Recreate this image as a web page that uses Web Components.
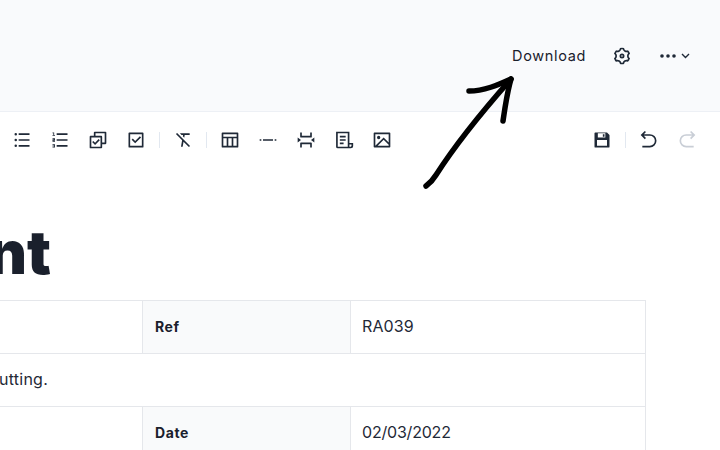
<!DOCTYPE html>
<html lang="en">
<head>
<meta charset="utf-8">
<title>Document</title>
<style>
html, body { margin: 0; height: 100%; overflow: hidden; background: #fff; }
body { font-family: Inter, "Liberation Sans", sans-serif; color: #1f2937; }
</style>
</head>
<body>
<app-page>
  <app-header>Download</app-header>
  <tool-bar>
    <tool-btn icon="ul"></tool-btn>
    <tool-btn icon="ol"></tool-btn>
    <tool-btn icon="checks"></tool-btn>
    <tool-btn icon="check"></tool-btn>
    <tool-sep></tool-sep>
    <tool-btn icon="clear"></tool-btn>
    <tool-sep></tool-sep>
    <tool-btn icon="table"></tool-btn>
    <tool-btn icon="rule"></tool-btn>
    <tool-btn icon="pagebreak"></tool-btn>
    <tool-btn icon="scroll"></tool-btn>
    <tool-btn icon="image"></tool-btn>
    <tool-btn icon="save" slot="end"></tool-btn>
    <tool-sep slot="end"></tool-sep>
    <tool-btn icon="undo" slot="end"></tool-btn>
    <tool-btn icon="redo" slot="end" muted></tool-btn>
  </tool-bar>
  <doc-sheet>
    <doc-title>nt</doc-title>
    <spec-table>
      <spec-cell></spec-cell>
      <spec-cell label>Ref</spec-cell>
      <spec-cell value>RA039</spec-cell>
      <spec-cell wide>utting.</spec-cell>
      <spec-cell></spec-cell>
      <spec-cell label>Date</spec-cell>
      <spec-cell value tight>02/03/2022</spec-cell>
    </spec-table>
  </doc-sheet>
  <sketch-arrow></sketch-arrow>
</app-page>

<script>
const ICONS = {
  ul: '<path d="M8 4h13v2H8V4zM4.5 6.500a1.500 1.500 0 1 1 0-3 1.500 1.500 0 0 1 0 3zm0 7a1.500 1.500 0 1 1 0-3 1.500 1.500 0 0 1 0 3zm0 6.900a1.500 1.500 0 1 1 0-3 1.500 1.500 0 0 1 0 3zM8 11h13v2H8v-2zm0 7h13v2H8v-2z"/>',
  ol: '<path d="M8 4h13v2H8V4zM5 3v3h1v1H3V6h1V4H3V3h2zM3 14v-2.500h2V11H3v-1h3v2.500H4v.5h2v1H3zm2 5.500H3v-1h2V18H3v-1h3v4H3v-1h2v-.5zM8 11h13v2H8v-2zm0 7h13v2H8v-2z"/>',
  checks: '<path d="M7 7V3a1 1 0 0 1 1-1h13a1 1 0 0 1 1 1v13a1 1 0 0 1-1 1h-4v3.993c0 .556-.449 1.007-1.007 1.007H3.007A1.006 1.006 0 0 1 2 20.993l.003-12.986C2.003 7.451 2.452 7 3.010 7H7zm2 0h6.993C16.549 7 17 7.449 17 8.007V15h3V4H9v3zm6 2H4.003L4 20h11V9zm-6.497 9l-3.536-3.536 1.414-1.414 2.122 2.122 4.242-4.243 1.414 1.414L8.503 18z"/>',
  check: '<path d="M4 3h16a1 1 0 0 1 1 1v16a1 1 0 0 1-1 1H4a1 1 0 0 1-1-1V4a1 1 0 0 1 1-1zm1 2v14h14V5H5zm6.003 11L6.760 11.757l1.414-1.414 2.829 2.829 5.656-5.657 1.415 1.414L11.003 16z"/>',
  clear: '<path d="M12.651 14.065L11.605 20H9.574l1.350-7.661-7.410-7.410L4.930 3.515 20.485 19.070l-1.414 1.414-6.420-6.420zm-.878-6.535l.270-1.530h-1.800l-2-2H20v2h-5.927L13.500 9.257 11.773 7.530z"/>',
  table: '<path d="M4 8h16V5H4v3zm10 11v-9h-4v9h4zm2 0h4v-9h-4v9zm-8 0v-9H4v9h4zM3 3h18a1 1 0 0 1 1 1v16a1 1 0 0 1-1 1H3a1 1 0 0 1-1-1V4a1 1 0 0 1 1-1z"/>',
  rule: '<path d="M2 11h2v2H2v-2zm4 0h12v2H6v-2zm14 0h2v2h-2v-2z"/>',
  pagebreak: '<path d="M17 21v-4H7v4H5v-5a1 1 0 0 1 1-1h12a1 1 0 0 1 1 1v5h-2zM7 3v4h10V3h2v5a1 1 0 0 1-1 1H6a1 1 0 0 1-1-1V3h2zM2 9l4 3-4 3V9zm20 0v6l-4-3 4-3z"/>',
  scroll: '<path fill="none" stroke="currentColor" stroke-width="2" d="M3.500 3h14v18h-13a1 1 0 0 1-1-1V3zM17.500 16.500h4.500V19a2 2 0 0 1-2 2h-2.500"/><path d="M7 7h7v2H7zM7 11h7v2H7zM7 15h4.500v2H7z"/>',
  image: '<path d="M4.828 21l-.020.020-.021-.020H2.992A.993.993 0 0 1 2 20.007V3.993A1 1 0 0 1 2.992 3h18.016c.548 0 .992.445.992.993v16.014a1 1 0 0 1-.992.993H4.828zM20 15V5H4v14L14 9l6 6zm0 2.828l-6-6L6.828 19H20v-1.172zM8 11a2 2 0 1 1 0-4 2 2 0 0 1 0 4z"/>',
  save: '<path d="M4 3h14l2.707 2.707a1 1 0 0 1 .293.707V20a1 1 0 0 1-1 1H4a1 1 0 0 1-1-1V4a1 1 0 0 1 1-1zm3 1v5h9V4H7zm-1 8v7h12v-7H6zm7-7h2v3h-2V5z"/>',
  undo: '<path d="M5.828 7l2.536 2.536L6.950 10.950 2 6l4.950-4.950 1.414 1.414L5.828 5H13a8 8 0 1 1 0 16H4v-2h9a6 6 0 1 0 0-12H5.828z"/>',
  redo: '<path d="M18.172 7H11a6 6 0 1 0 0 12h9v2h-9a8 8 0 1 1 0-16h7.172l-2.536-2.536L17.050 1.050 22 6l-4.950 4.950-1.414-1.414L18.172 7z"/>'
};

class AppPage extends HTMLElement {
  constructor() {
    super();
    this.attachShadow({ mode: "open" }).innerHTML = `
      <style>
        :host { display: flex; flex-direction: column; position: relative; width: 720px; height: 450px; overflow: hidden; }
      </style>
      <slot></slot>`;
  }
}

class AppHeader extends HTMLElement {
  constructor() {
    super();
    this.attachShadow({ mode: "open" }).innerHTML = `
      <style>
        :host { display: flex; align-items: center; justify-content: flex-end; height: 111px;
          padding: 0 30px 0 0; background: #f9fafc; border-bottom: 1px solid #edf0f5; flex: none; }
        .download { font-size: 14.500px; font-weight: 400; letter-spacing: .66px; color: #1a202c; }
        svg { display: block; fill: currentColor; color: #1f2937; }
        .gear { margin-left: 26px; }
        .more { display: flex; align-items: center; margin-left: 28px; gap: 5px; }
      </style>
      <span class="download"><slot></slot></span>
      <svg class="gear" width="20" height="20" viewBox="0 0 24 24"><path d="M3.340 17a10.018 10.018 0 0 1-.978-2.326 3 3 0 0 0 .002-5.347A9.990 9.990 0 0 1 4.865 4.990a3 3 0 0 0 4.631-2.674 9.990 9.990 0 0 1 5.007.002 3 3 0 0 0 4.632 2.672c.579.590 1.093 1.261 1.525 2.010.433.749.757 1.530.978 2.326a3 3 0 0 0-.002 5.347 9.990 9.990 0 0 1-2.501 4.337 3 3 0 0 0-4.631 2.674 9.990 9.990 0 0 1-5.007-.002 3 3 0 0 0-4.632-2.672A10.018 10.018 0 0 1 3.340 17zm5.660.196a4.993 4.993 0 0 1 2.250 2.770c.499.047 1 .048 1.499.001A4.993 4.993 0 0 1 15 17.197a4.993 4.993 0 0 1 3.525-.565c.290-.408.540-.843.748-1.298A4.993 4.993 0 0 1 18 12c0-1.260.470-2.437 1.273-3.334a8.126 8.126 0 0 0-.750-1.298A4.993 4.993 0 0 1 15 6.804a4.993 4.993 0 0 1-2.250-2.770c-.499-.047-1-.048-1.499-.001A4.993 4.993 0 0 1 9 6.803a4.993 4.993 0 0 1-3.525.565 7.990 7.990 0 0 0-.748 1.298A4.993 4.993 0 0 1 6 12c0 1.260-.470 2.437-1.273 3.334a8.126 8.126 0 0 0 .750 1.298A4.993 4.993 0 0 1 9 17.196zM12 15a3 3 0 1 1 0-6 3 3 0 0 1 0 6zm0-2a1 1 0 1 0 0-2 1 1 0 0 0 0 2z"/></svg>
      <div class="more">
        <svg width="16" height="4" viewBox="0 0 16 4"><circle cx="2" cy="2" r="1.800"/><circle cx="8" cy="2" r="1.800"/><circle cx="14" cy="2" r="1.800"/></svg>
        <svg width="9" height="6" viewBox="0 0 9 6"><path d="M1 1l3.500 3.500L8 1" fill="none" stroke="currentColor" stroke-width="1.400"/></svg>
      </div>`;
  }
}

class ToolBar extends HTMLElement {
  constructor() {
    super();
    this.attachShadow({ mode: "open" }).innerHTML = `
      <style>
        :host { display: flex; align-items: center; justify-content: space-between; height: 56px; padding: 0 14px 0 3px; flex: none; }
        .group { display: flex; align-items: center; }
      </style>
      <div class="group"><slot></slot></div>
      <div class="group"><slot name="end"></slot></div>`;
  }
}

class ToolBtn extends HTMLElement {
  constructor() {
    super();
    this.attachShadow({ mode: "open" }).innerHTML = `
      <style>
        :host { display: block; padding: 9px; color: #1f2937; }
        :host([muted]) { color: #c9ced6; }
        svg { display: block; width: 20px; height: 20px; fill: currentColor; }
      </style>
      <svg viewBox="0 0 24 24"></svg>`;
  }
  connectedCallback() {
    this.shadowRoot.querySelector("svg").innerHTML = ICONS[this.getAttribute("icon")];
  }
}

class ToolSep extends HTMLElement {
  constructor() {
    super();
    this.attachShadow({ mode: "open" }).innerHTML = `
      <style>
        :host { display: block; width: 1px; height: 16px; margin: 0 4px; background: #e2e8f0; }
      </style>`;
  }
}

class DocSheet extends HTMLElement {
  constructor() {
    super();
    this.attachShadow({ mode: "open" }).innerHTML = `
      <style>
        :host { display: block; flex: 1; min-height: 0; }
      </style>
      <slot></slot>`;
  }
}

class DocTitle extends HTMLElement {
  constructor() {
    super();
    this.attachShadow({ mode: "open" }).innerHTML = `
      <style>
        :host { display: block; height: 132px; box-sizing: border-box; padding-top: 48px; margin-left: -12px;
          font-size: 60px; line-height: 72px; font-weight: 900; color: #1a202c; }
      </style>
      <slot></slot>`;
  }
}

class SpecTable extends HTMLElement {
  constructor() {
    super();
    this.attachShadow({ mode: "open" }).innerHTML = `
      <style>
        :host { display: grid; grid-template-columns: 142px 208px 295px; grid-auto-rows: 53px; width: 646px;
          border-top: 1px solid #e5e7eb; border-right: 1px solid #e5e7eb; box-sizing: border-box; }
      </style>
      <slot></slot>`;
  }
}

class SpecCell extends HTMLElement {
  constructor() {
    super();
    this.attachShadow({ mode: "open" }).innerHTML = `
      <style>
        :host { display: flex; align-items: center; padding: 0 12px 2px; box-sizing: border-box; min-width: 0;
          border-bottom: 1px solid #e5e7eb; border-left: 1px solid #e5e7eb;
          font-size: 16px; color: #1f2937; white-space: nowrap; }
        :host(:first-child), :host([wide]), :host(:nth-child(5)) { border-left: 0; }
        :host([wide]) { grid-column: 1 / -1; padding-left: 0; margin-left: -1px; letter-spacing: .25px; }
        :host([label]) { background: #f9fafb; font-size: 14px; font-weight: 700; letter-spacing: .6px; color: #1a202c; }
        :host([value]) { padding-left: 11px; letter-spacing: .1px; }
        :host([tight]) { letter-spacing: -.2px; }
      </style>
      <slot></slot>`;
  }
}

class SketchArrow extends HTMLElement {
  constructor() {
    super();
    this.attachShadow({ mode: "open" }).innerHTML = `
      <style>
        :host { position: absolute; left: 420px; top: 70px; width: 100px; height: 122px; pointer-events: none; }
        svg { display: block; }
      </style>
      <svg width="100" height="122" viewBox="420 70 100 122" fill="none" stroke="#000" stroke-width="5.500" stroke-linecap="round" stroke-linejoin="round">
        <path d="M426 186C430 183 433 180 436 175C452 150 480 114 511 79"/>
        <path d="M469 91C484 91 498 85 511 79C507 93 505 107 503 121"/>
      </svg>`;
  }
}

customElements.define("app-page", AppPage);
customElements.define("app-header", AppHeader);
customElements.define("tool-bar", ToolBar);
customElements.define("tool-btn", ToolBtn);
customElements.define("tool-sep", ToolSep);
customElements.define("doc-sheet", DocSheet);
customElements.define("doc-title", DocTitle);
customElements.define("spec-table", SpecTable);
customElements.define("spec-cell", SpecCell);
customElements.define("sketch-arrow", SketchArrow);
</script>
</body>
</html>
